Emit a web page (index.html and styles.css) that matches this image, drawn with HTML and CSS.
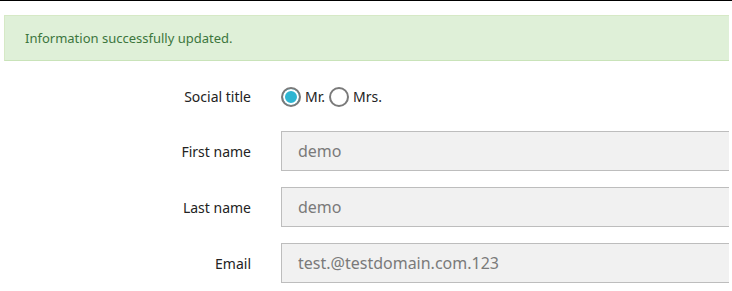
FILE: index.html
```html
<!DOCTYPE html>
<html lang="en">
<head>
  <meta charset="UTF-8">
  <title>Your personal information</title>
  <link rel="stylesheet" href="styles.css">
</head>
<body>
  <div class="page">
    <!-- Notification -->
    <div class="alert-success">Information successfully updated.</div>

    <!-- Identity form -->
    <form class="identity-form">
      <div class="form-row">
        <label class="form-label">Social title</label>
        <div class="form-field radios">
          <label class="radio-inline"><span class="radio checked"></span>Mr.</label>
          <label class="radio-inline"><span class="radio"></span>Mrs.</label>
        </div>
      </div>
      <div class="form-row">
        <label class="form-label">First name</label>
        <div class="form-field"><input class="form-control" type="text" value="demo"></div>
      </div>
      <div class="form-row">
        <label class="form-label">Last name</label>
        <div class="form-field"><input class="form-control" type="text" value="demo"></div>
      </div>
      <div class="form-row">
        <label class="form-label">Email</label>
        <div class="form-field"><input class="form-control" type="text" value="test.@testdomain.com.123"></div>
      </div>
    </form>
  </div>
</body>
</html>
```

FILE: styles.css
```css
* {
  margin: 0;
  padding: 0;
  box-sizing: border-box;
}
body {
  font-family: 'Noto Sans', sans-serif;
  color: #232323;
  background: #fff;
  border-top: 1px solid #000;
}
/* content is cut at the right edge, like a scrolled panel */
.page {
  width: 729px;
  overflow: hidden;
  padding: 14px 0 0 4px;
}

/* Notification */
.alert-success {
  width: 740px;
  background: #dff0d8;
  border: 1px solid #d6e9c6;
  border-bottom-color: #c9e3b9;
  color: #3c763d;
  font-size: 13px;
  line-height: 18px;
  padding: 13px 20px 13px;
}

/* Form */
.identity-form {
  padding-top: 18px;
}
.form-row {
  display: flex;
  align-items: center;
  margin-bottom: 16px;
}
.form-row:first-child {
  height: 35px;
  margin-bottom: 17px;
}
.form-label {
  width: 247px;
  flex-shrink: 0;
  text-align: right;
  font-size: 14px;
}
.form-field {
  margin-left: 30px;
}
.form-control {
  display: block;
  width: 460px;
  height: 40px;
  background: #f1f1f1;
  border: 1px solid #bdbdbd;
  color: #7a7a7a;
  font-family: 'Noto Sans', sans-serif;
  font-size: 16px;
  padding: 0 16px;
  outline: none;
}

/* Radios */
.radios {
  display: flex;
  align-items: center;
  gap: 4px;
}
.radio-inline {
  display: flex;
  align-items: center;
  font-size: 14px;
  gap: 4px;
}
.radio {
  width: 20px;
  height: 20px;
  border: 2px solid #7a7a7a;
  border-radius: 50%;
  display: inline-block;
  background: #fff;
}
.radio.checked {
  background: #2fb5d2;
  box-shadow: inset 0 0 0 2px #fff;
}
```
